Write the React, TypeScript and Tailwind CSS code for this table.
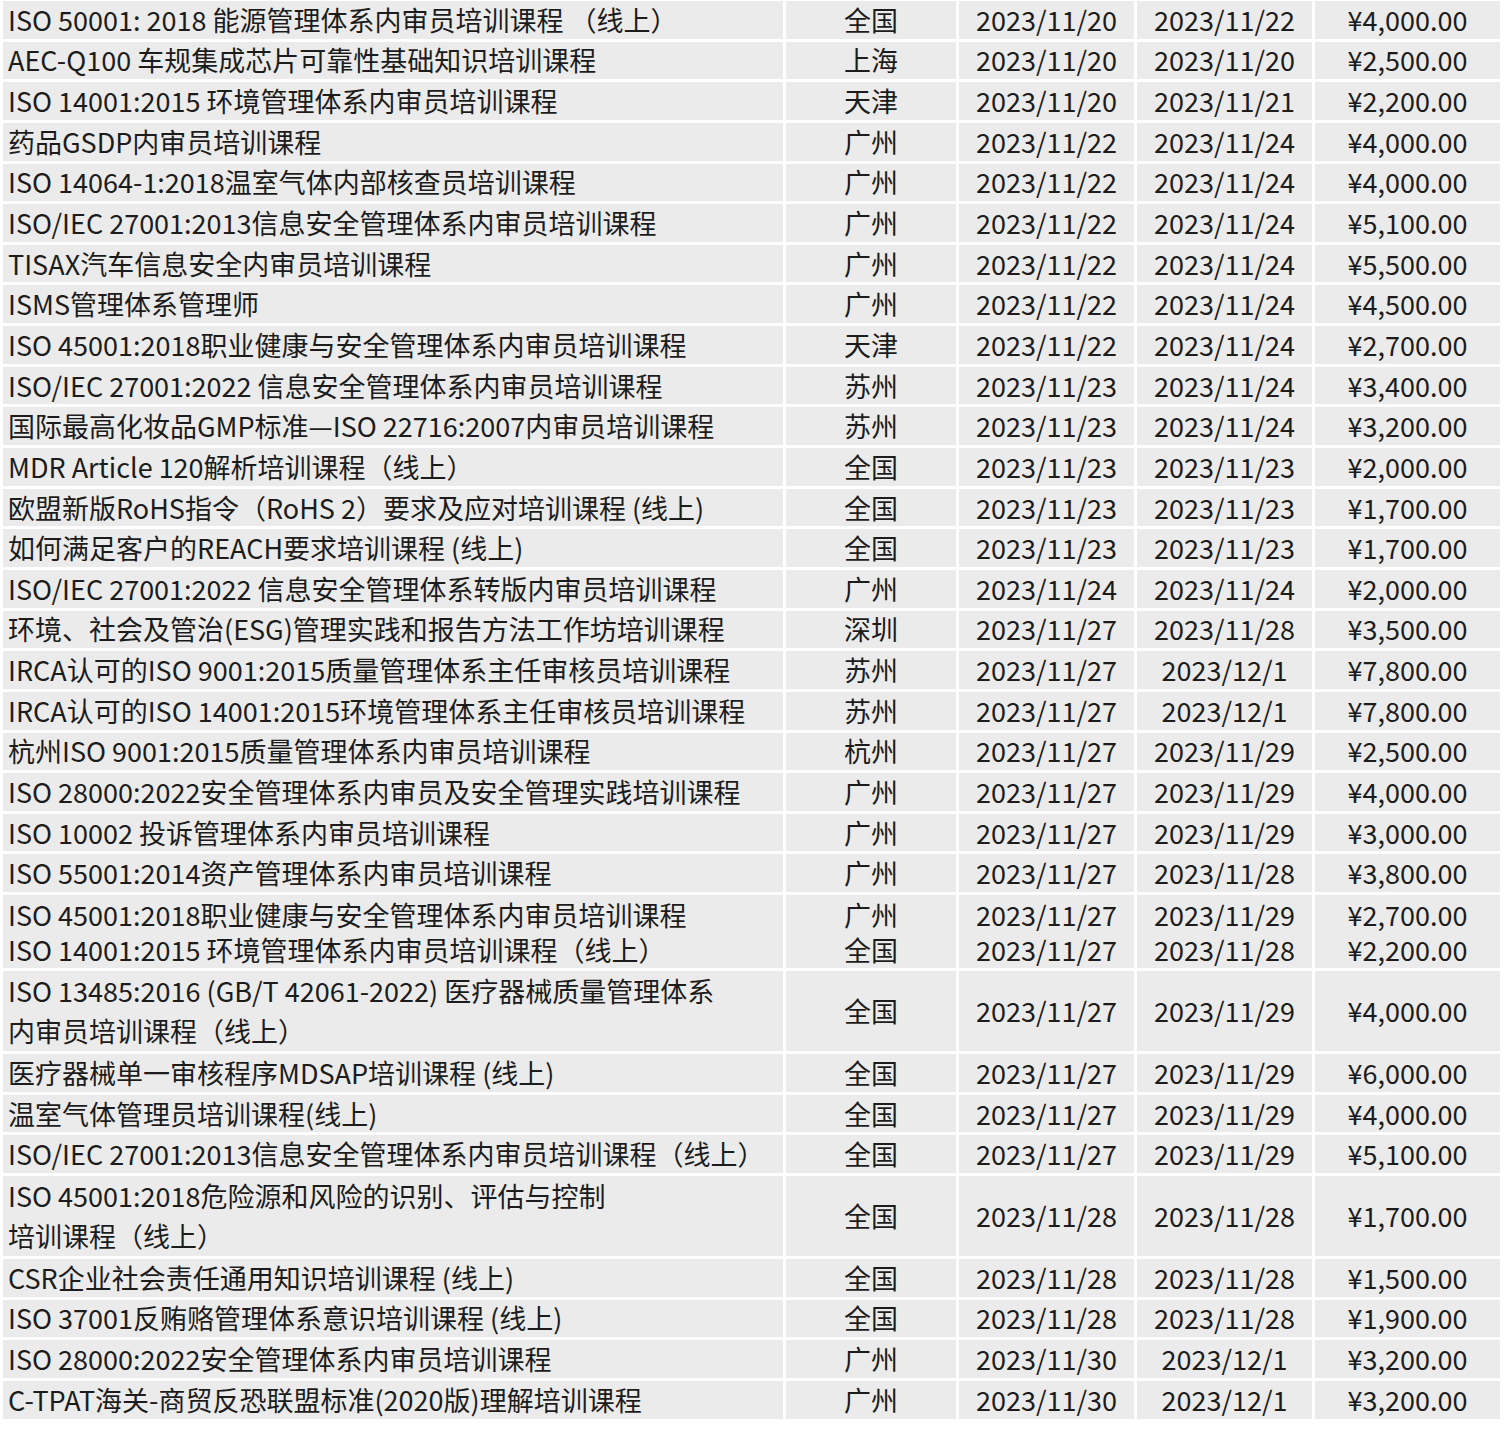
const rows: [string | string[], string, string, string, string][] = [
  ["ISO 50001: 2018 能源管理体系内审员培训课程 （线上）", "全国", "2023/11/20", "2023/11/22", "¥4,000.00"],
  ["AEC-Q100 车规集成芯片可靠性基础知识培训课程", "上海", "2023/11/20", "2023/11/20", "¥2,500.00"],
  ["ISO 14001:2015 环境管理体系内审员培训课程", "天津", "2023/11/20", "2023/11/21", "¥2,200.00"],
  ["药品GSDP内审员培训课程", "广州", "2023/11/22", "2023/11/24", "¥4,000.00"],
  ["ISO 14064-1:2018温室气体内部核查员培训课程", "广州", "2023/11/22", "2023/11/24", "¥4,000.00"],
  ["ISO/IEC 27001:2013信息安全管理体系内审员培训课程", "广州", "2023/11/22", "2023/11/24", "¥5,100.00"],
  ["TISAX汽车信息安全内审员培训课程", "广州", "2023/11/22", "2023/11/24", "¥5,500.00"],
  ["ISMS管理体系管理师", "广州", "2023/11/22", "2023/11/24", "¥4,500.00"],
  ["ISO 45001:2018职业健康与安全管理体系内审员培训课程", "天津", "2023/11/22", "2023/11/24", "¥2,700.00"],
  ["ISO/IEC 27001:2022 信息安全管理体系内审员培训课程", "苏州", "2023/11/23", "2023/11/24", "¥3,400.00"],
  ["国际最高化妆品GMP标准—ISO 22716:2007内审员培训课程", "苏州", "2023/11/23", "2023/11/24", "¥3,200.00"],
  ["MDR Article 120解析培训课程（线上）", "全国", "2023/11/23", "2023/11/23", "¥2,000.00"],
  ["欧盟新版RoHS指令（RoHS 2）要求及应对培训课程 (线上)", "全国", "2023/11/23", "2023/11/23", "¥1,700.00"],
  ["如何满足客户的REACH要求培训课程 (线上)", "全国", "2023/11/23", "2023/11/23", "¥1,700.00"],
  ["ISO/IEC 27001:2022 信息安全管理体系转版内审员培训课程", "广州", "2023/11/24", "2023/11/24", "¥2,000.00"],
  ["环境、社会及管治(ESG)管理实践和报告方法工作坊培训课程", "深圳", "2023/11/27", "2023/11/28", "¥3,500.00"],
  ["IRCA认可的ISO 9001:2015质量管理体系主任审核员培训课程", "苏州", "2023/11/27", "2023/12/1", "¥7,800.00"],
  ["IRCA认可的ISO 14001:2015环境管理体系主任审核员培训课程", "苏州", "2023/11/27", "2023/12/1", "¥7,800.00"],
  ["杭州ISO 9001:2015质量管理体系内审员培训课程", "杭州", "2023/11/27", "2023/11/29", "¥2,500.00"],
  ["ISO 28000:2022安全管理体系内审员及安全管理实践培训课程", "广州", "2023/11/27", "2023/11/29", "¥4,000.00"],
  ["ISO 10002 投诉管理体系内审员培训课程", "广州", "2023/11/27", "2023/11/29", "¥3,000.00"],
  ["ISO 55001:2014资产管理体系内审员培训课程", "广州", "2023/11/27", "2023/11/28", "¥3,800.00"],
];

const pairRow = {
  names: ["ISO 45001:2018职业健康与安全管理体系内审员培训课程", "ISO 14001:2015 环境管理体系内审员培训课程（线上）"],
  cities: ["广州", "全国"],
  starts: ["2023/11/27", "2023/11/27"],
  ends: ["2023/11/29", "2023/11/28"],
  prices: ["¥2,700.00", "¥2,200.00"],
};

const rest: [string | string[], string, string, string, string][] = [
  [["ISO 13485:2016 (GB/T 42061-2022) 医疗器械质量管理体系", "内审员培训课程（线上）"], "全国", "2023/11/27", "2023/11/29", "¥4,000.00"],
  ["医疗器械单一审核程序MDSAP培训课程 (线上)", "全国", "2023/11/27", "2023/11/29", "¥6,000.00"],
  ["温室气体管理员培训课程(线上)", "全国", "2023/11/27", "2023/11/29", "¥4,000.00"],
  ["ISO/IEC 27001:2013信息安全管理体系内审员培训课程（线上）", "全国", "2023/11/27", "2023/11/29", "¥5,100.00"],
  [["ISO 45001:2018危险源和风险的识别、评估与控制", "培训课程（线上）"], "全国", "2023/11/28", "2023/11/28", "¥1,700.00"],
  ["CSR企业社会责任通用知识培训课程 (线上)", "全国", "2023/11/28", "2023/11/28", "¥1,500.00"],
  ["ISO 37001反贿赂管理体系意识培训课程 (线上)", "全国", "2023/11/28", "2023/11/28", "¥1,900.00"],
  ["ISO 28000:2022安全管理体系内审员培训课程", "广州", "2023/11/30", "2023/12/1", "¥3,200.00"],
  ["C-TPAT海关-商贸反恐联盟标准(2020版)理解培训课程", "广州", "2023/11/30", "2023/12/1", "¥3,200.00"],
];

const cell = "bg-[#ebebeb] p-0 align-middle whitespace-nowrap";

function Row({ r }: { r: [string | string[], string, string, string, string] }) {
  const [name, city, start, end, price] = r;
  const multi = Array.isArray(name);
  return (
    <tr>
      <td className={`${cell} pl-[5px] text-left ${multi ? "h-[78.5px] leading-[40px]" : "h-[37.65px]"}`}>
        {multi ? (name as string[]).map((n) => <div key={n}>{n}</div>) : name}
      </td>
      <td className={`${cell} text-center`}>{city}</td>
      <td className={`${cell} text-center`}>{start}</td>
      <td className={`${cell} text-center`}>{end}</td>
      <td className={`${cell} text-center`}>{price}</td>
    </tr>
  );
}

function Lines({ items, left }: { items: string[]; left?: boolean }) {
  return (
    <td className={`${cell} h-[73px] leading-[35px] ${left ? "pl-[5px] text-left" : "text-center"}`}>
      {items.map((t, i) => (
        <div key={i}>{t}</div>
      ))}
    </td>
  );
}

export default function App() {
  return (
    <div className="min-h-[1430px] w-[1504px] bg-white font-['Noto_Sans_CJK_SC','Noto_Sans',sans-serif] text-[27px] leading-[30px] text-[#1c1c1c]">
      <table className="mt-[-2px] border-separate border-spacing-x-[3px] border-spacing-y-[3px]">
        <colgroup>
          <col className="w-[780px]" />
          <col className="w-[170px]" />
          <col className="w-[175px]" />
          <col className="w-[175px]" />
          <col className="w-[185px]" />
        </colgroup>
        <tbody>
          {rows.map((r, i) => (
            <Row key={i} r={r} />
          ))}
          <tr>
            <Lines items={pairRow.names} left />
            <Lines items={pairRow.cities} />
            <Lines items={pairRow.starts} />
            <Lines items={pairRow.ends} />
            <Lines items={pairRow.prices} />
          </tr>
          {rest.map((r, i) => (
            <Row key={i} r={r} />
          ))}
        </tbody>
      </table>
    </div>
  );
}
